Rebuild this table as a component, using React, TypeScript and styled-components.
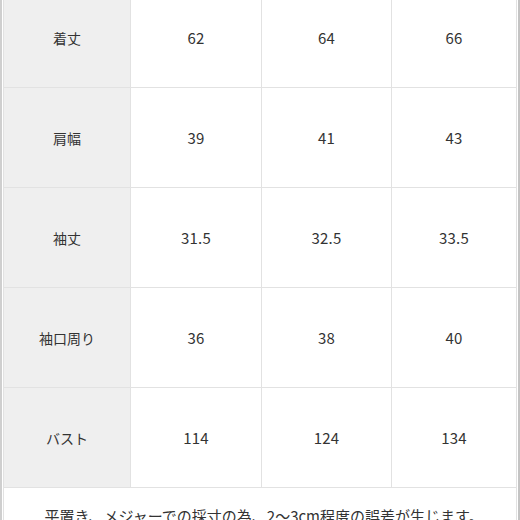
import { Fragment } from 'react';
import styled, { createGlobalStyle } from 'styled-components';

type SizeRow = {
  label: string;
  values: string[];
};

const rows: SizeRow[] = [
  { label: '着丈', values: ['62', '64', '66'] },
  { label: '肩幅', values: ['39', '41', '43'] },
  { label: '袖丈', values: ['31.5', '32.5', '33.5'] },
  { label: '袖口周り', values: ['36', '38', '40'] },
  { label: 'バスト', values: ['114', '124', '134'] },
];

const GlobalStyle = createGlobalStyle`
  html, body {
    margin: 0;
    padding: 0;
    background: #ffffff;
    overflow: hidden;
  }
  body {
    font-family: "Noto Sans CJK JP", "Noto Sans", sans-serif;
    color: #333333;
  }
`;

const Frame = styled.div`
  width: 520px;
  height: 520px;
  box-sizing: border-box;
  overflow: hidden;
  background: #ffffff;
  border-left: 2px solid #cfcfcf;
  border-right: 2px solid #c4c4c4;
  padding: 0 1px;
`;

const Table = styled.div`
  display: grid;
  grid-template-columns: 126px 130px 129px 124px;
  grid-auto-rows: 99px;
  gap: 1px;
  padding: 0 1px 1px;
  margin-top: -12px;
  background: #e2e2e2;
`;

const Cell = styled.div<{ $head?: boolean }>`
  display: flex;
  align-items: center;
  justify-content: center;
  background: ${({ $head }) => ($head ? '#efefef' : '#ffffff')};
  font-size: ${({ $head }) => ($head ? '14px' : '15px')};
  color: #333333;
  letter-spacing: ${({ $head }) => ($head ? '0' : '0.2px')};
`;

const Note = styled.div`
  grid-column: 1 / -1;
  background: #ffffff;
  padding: 17px 0 0 8px;
  text-align: center;
  font-size: 15px;
  line-height: 1.5;
  white-space: nowrap;
  color: #333333;
`;

export default function App() {
  return (
    <>
      <GlobalStyle />
      <Frame>
        <Table>
          {rows.map((row) => (
            <Fragment key={row.label}>
              <Cell $head>{row.label}</Cell>
              {row.values.map((v, i) => (
                <Cell key={i}>{v}</Cell>
              ))}
            </Fragment>
          ))}
          <Note>平置き、メジャーでの採寸の為、2〜3cm程度の誤差が生じます。</Note>
        </Table>
      </Frame>
    </>
  );
}
